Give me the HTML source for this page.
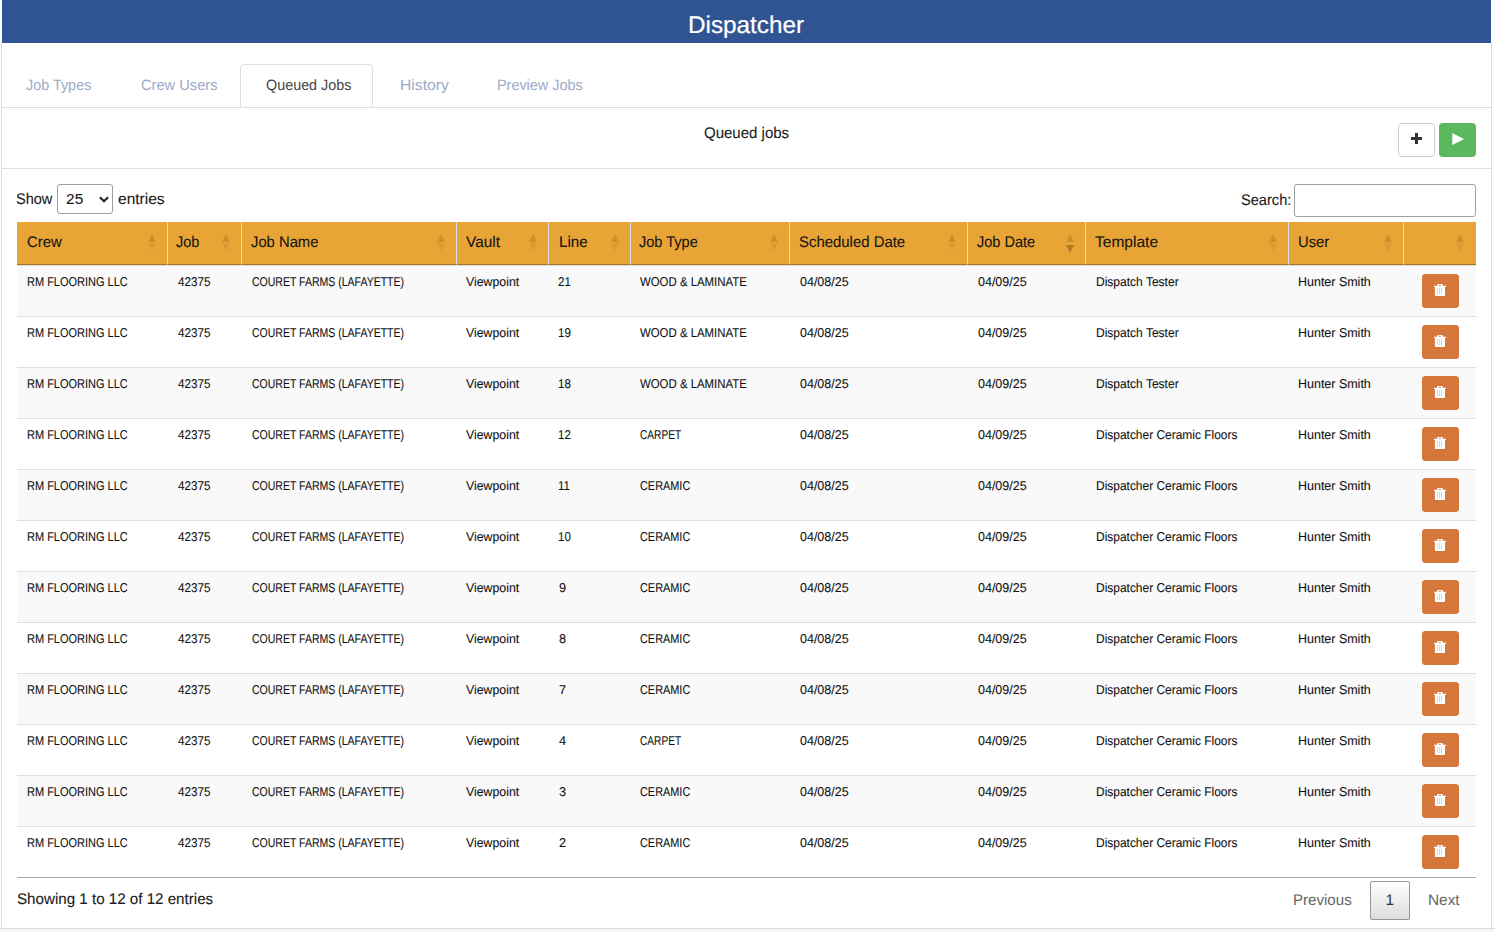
<!DOCTYPE html>
<html lang="en">
<head>
<meta charset="utf-8">
<title>Dispatcher</title>
<style>
*{box-sizing:border-box}
html,body{margin:0;padding:0}
body{text-rendering:geometricPrecision;width:1495px;height:932px;position:relative;overflow:hidden;background:#fff;color:#333;
 font-family:"Liberation Sans",sans-serif;font-size:15.4px;line-height:22px}
.s{display:inline-block;transform-origin:0 50%;white-space:nowrap}
.heading{position:absolute;left:2px;top:0;width:1489px;height:43px;background:#305393;color:#fff;text-align:center}
.heading h3{-webkit-text-stroke:0.2px #fff;margin:0;font-size:24.2px;font-weight:normal;line-height:43px;height:43px;position:absolute;left:0;top:4px;width:100%;text-align:left}
.panel{position:absolute;left:1px;top:43px;width:1491px;height:885px;border-left:1px solid #ddd;border-right:1px solid #ddd;background:#fff}
.footer{position:absolute;left:0;top:928px;width:1495px;height:4px;background:#f5f5f5;border-top:1px solid #ddd}
/* coordinates inside .panel: x = pageX-2, y = pageY-43 */
.tabs{list-style:none;margin:0;padding:0;position:absolute;left:0;top:21px;width:1489px;height:44px;border-bottom:1px solid #ddd}
.tabs li{position:absolute;top:0;height:44px}
.tabs li a{font-size:15px;display:block;height:44px;border:1px solid transparent;border-radius:4px 4px 0 0;color:#9caac8;line-height:22px;padding:10px 0 0 0;text-decoration:none;white-space:nowrap}
.tabs li.active a{border-color:#ddd;background:#fff;color:#444}
.subhead{position:absolute;left:0;top:65px;width:1489px;height:60px}
.subtitle{position:absolute;left:0;top:15px;width:100%;height:22px;line-height:22px;color:#1a1a1a;-webkit-text-stroke:0.1px #1a1a1a}
.btn{position:absolute;display:block;width:37px;height:34px;padding:0;margin:0;border-radius:3.5px;border:1px solid transparent;font:inherit;cursor:pointer}
.btn svg{position:absolute;display:block}
.btn-add{left:1396px;top:15px;background:#fff;border-color:#ccc}
.btn-add svg{left:12px;top:9px}
.btn-run{left:1437px;top:15px;background:#5cb85c;border-color:#5cb85c}
.btn-run svg{left:11.5px;top:9px}
.rule{position:absolute;left:0;top:125px;width:1489px;height:1px;background:#ddd}
.dt-length{position:absolute;left:15px;top:141px;height:30px;line-height:32px;white-space:nowrap;color:#1a1a1a;-webkit-text-stroke:0.1px #1a1a1a}
.dt-length label,.dt-filter label{display:block;position:relative;height:100%}
.dt-length .s,.dt-filter .s{position:absolute;top:0}
.select{position:absolute;left:40px;top:0;width:56px;height:30px}
.select select{-webkit-appearance:none;appearance:none;display:block;position:absolute;left:0;top:0;width:56px;height:30px;margin:0;padding:0 0 3px 8.1px;border:1px solid #9e9e9e;border-radius:3px;background:#fff;color:#1a1a1a;font-family:"Liberation Sans",sans-serif;font-size:15.4px;line-height:27px;letter-spacing:0.2px;outline:none}
.select svg{position:absolute;right:3.6px;top:11.6px;pointer-events:none}
.selv{position:absolute;left:0;top:0;height:28px;line-height:30px}
.dt-filter{position:absolute;left:1200px;top:141px;width:274px;height:33px;line-height:33px;color:#1a1a1a;-webkit-text-stroke:0.1px #1a1a1a}
.input{-webkit-appearance:none;appearance:none;display:block;position:absolute;right:0;top:0;width:182px;height:33px;margin:0;padding:5px;border:1px solid #a0a0a0;border-radius:3px;background:#fff;font:inherit;outline:none}
table.dt{position:absolute;left:15px;top:179px;width:1459px;border-collapse:separate;border-spacing:0;table-layout:fixed;border-bottom:1px solid #aaa}
table.dt th{position:relative;height:43px;padding:0;background:#e8a435;border-bottom:1px solid #a8761f;border-right:1px solid #ddd;color:#151515;-webkit-text-stroke:0.1px #151515;font-weight:normal;text-align:left;font-size:15.4px;line-height:22px;vertical-align:top;white-space:nowrap}
table.dt th.last{border-right:none}
table.dt th.last i{right:12px}
table.dt th .s{position:absolute;left:10px;top:10px}
table.dt th i{position:absolute;right:11.5px;width:0;height:0;border-left:4px solid transparent;border-right:4px solid transparent}
table.dt th i.up{top:12px;border-bottom:8px solid rgba(0,0,0,.12)}
table.dt th i.dn{top:21px;border-top:8px solid rgba(0,0,0,.055)}
table.dt th.sorting_desc i.dn{top:23px;border-top-color:rgba(0,0,0,.25)}
table.dt td{position:relative;height:51px;padding:0;border-top:1px solid #ddd;font-size:12.75px;line-height:18px;vertical-align:top;color:#111;-webkit-text-stroke:0.1px #111;white-space:nowrap}
table.dt tr.odd td{background:#f9f9f9}
table.dt td .s{position:absolute;left:10px;top:7px}
.btn-del{left:18px;top:8px;background:#d5773a;border-color:#d5773a;border-radius:3px}
.btn-del svg{left:11px;top:9px}
.dt-info{position:absolute;left:15px;top:846px;height:22px;line-height:22px;color:#1a1a1a;-webkit-text-stroke:0.1px #1a1a1a;white-space:nowrap}
.dt-paginate{position:absolute;left:0;top:838px;width:1489px;height:39px}
.pb{text-decoration:none;position:absolute;top:0;height:39px;line-height:37px;border:1px solid transparent;border-radius:2px;color:#666;white-space:nowrap}
.pb.prev{left:1276px;width:90px}
.pb.cur{left:1368px;width:40px;border-color:#979797;background:linear-gradient(to bottom,#fff 0%,#dcdcdc 100%);color:#333}
.pb.next{left:1411px;width:60px}
.pb .s{position:absolute;left:16px;top:0}

</style>
</head>
<body>
<div class="heading"><h3><span class="s" style="transform:scale(1.0044,1.0);margin-left:685.98px">Dispatcher</span></h3></div>
<div class="panel">
  <ul class="tabs">
    <li style="left:1px;width:111px"><a href="#job-types"><span class="s" style="transform:scale(0.9592,1.0);margin-left:22.30px">Job Types</span></a></li>
    <li style="left:114px;width:122px"><a href="#crew-users"><span class="s" style="transform:scale(0.9774,1.0);margin-left:23.76px">Crew Users</span></a></li>
    <li class="active" style="left:238px;width:133px"><a href="#queued-jobs"><span class="s" style="transform:scale(0.9573,1.0);margin-left:24.73px">Queued Jobs</span></a></li>
    <li style="left:373px;width:99px"><a href="#history"><span class="s" style="transform:scale(1.0450,1.0);margin-left:24.33px">History</span></a></li>
    <li style="left:474px;width:132px"><a href="#preview-jobs"><span class="s" style="transform:scale(0.9595,1.0);margin-left:20.07px">Preview Jobs</span></a></li>
  </ul>
  <div class="subhead">
    <div class="subtitle"><span class="s" style="transform:scale(0.9752,1.0);margin-left:702.01px">Queued jobs</span></div>
    <button type="button" class="btn btn-add" title="Add"><svg viewBox="0 0 11 11" width="11" height="11" aria-hidden="true"><path d="M4 0h3v4h4v3H7v4H4V7H0V4h4z" fill="#333"/></svg></button>
    <button type="button" class="btn btn-run" title="Run"><svg viewBox="0 0 12 12" width="12" height="12" aria-hidden="true"><path d="M0.3 0 12 6 0.3 12z" fill="#fff"/></svg></button>
  </div>
  <div class="rule"></div>
  <div class="dt-length"><label><span class="s" style="transform:scale(0.9440,1.0);margin-left:-0.86px">Show</span><span class="select"><select aria-label="entries per page"><option>10</option><option selected>25</option><option>50</option><option>100</option></select><svg viewBox="0 0 10 7" width="10" height="7" aria-hidden="true"><path d="M0.9 1.2l4.1 4.1 4.1-4.1" fill="none" stroke="#222" stroke-width="2.1" stroke-linecap="butt" stroke-linejoin="miter"/></svg></span><span class="s" style="transform:scale(1.0095,1.0);margin-left:100.53px">entries</span></label></div>
  <div class="dt-filter"><label><span class="s" style="transform:scale(0.9484,1.0);margin-left:38.66px">Search:</span><input class="input" type="search" aria-label="Search"></label></div>
  <table class="dt">
    <thead><tr>
<th class="sorting" style="width:151px"><span class="s" style="transform:scale(0.9666,1.0);margin-left:-0.10px">Crew</span><i class="up"></i><i class="dn"></i></th>
<th class="sorting" style="width:74px"><span class="s" style="transform:scale(0.9411,1.0);margin-left:-1.83px">Job</span><i class="up"></i><i class="dn"></i></th>
<th class="sorting" style="width:215px"><span class="s" style="transform:scale(0.9609,1.0);margin-left:-1.45px">Job Name</span><i class="up"></i><i class="dn"></i></th>
<th class="sorting" style="width:92px"><span class="s" style="transform:scale(1.0005,1.0);margin-left:-1.41px">Vault</span><i class="up"></i><i class="dn"></i></th>
<th class="sorting" style="width:82px"><span class="s" style="transform:scale(0.9872,1.0);margin-left:-0.43px">Line</span><i class="up"></i><i class="dn"></i></th>
<th class="sorting" style="width:159px"><span class="s" style="transform:scale(0.9446,1.0);margin-left:-1.87px">Job Type</span><i class="up"></i><i class="dn"></i></th>
<th class="sorting" style="width:178px"><span class="s" style="transform:scale(0.9692,1.0);margin-left:-1.06px">Scheduled Date</span><i class="up"></i><i class="dn"></i></th>
<th class="sorting_desc" style="width:118px"><span class="s" style="transform:scale(0.9447,1.0);margin-left:-0.83px">Job Date</span><i class="up"></i><i class="dn"></i></th>
<th class="sorting" style="width:203px"><span class="s" style="transform:scale(1.0095,1.0);margin-left:-0.98px">Template</span><i class="up"></i><i class="dn"></i></th>
<th class="sorting" style="width:115px"><span class="s" style="transform:scale(0.9619,1.0);margin-left:-1.16px">User</span><i class="up"></i><i class="dn"></i></th>
<th class="sorting last" style="width:72px"><i class="up"></i><i class="dn"></i></th>
    </tr></thead>
    <tbody>
<tr class="odd">
<td><span class="s" style="transform:scale(0.8616,1.0);margin-left:0.08px">RM FLOORING LLC</span></td>
<td><span class="s" style="transform:scale(0.9170,1.0);margin-left:0.16px">42375</span></td>
<td><span class="s" style="transform:scale(0.8244,1.0);margin-left:-0.31px">COURET FARMS (LAFAYETTE)</span></td>
<td><span class="s" style="transform:scale(0.9668,1.0);margin-left:-0.84px">Viewpoint</span></td>
<td><span class="s" style="transform:scale(0.9045,1.0);margin-left:-0.72px">21</span></td>
<td><span class="s" style="transform:scale(0.8937,1.0);margin-left:-1.19px">WOOD &amp; LAMINATE</span></td>
<td><span class="s" style="transform:scale(0.9802,1.0);margin-left:0.02px">04/08/25</span></td>
<td><span class="s" style="transform:scale(0.9802,1.0);margin-left:0.02px">04/09/25</span></td>
<td><span class="s" style="transform:scale(0.9431,1.0);margin-left:-0.16px">Dispatch Tester</span></td>
<td><span class="s" style="transform:scale(0.9782,1.0);margin-left:-0.82px">Hunter Smith</span></td>
<td class="act"><button type="button" class="btn btn-del" title="Delete"><svg class="ic-trash" viewBox="0 0 12 12" width="12" height="12" aria-hidden="true"><path d="M3.5 0h5l0.6 1.7H12v1.4H0V1.7h2.9z M4.5 1.35a1.3 0.5 0 0 0 2.6 0a1.3 0.5 0 0 0 -2.6 0z M0.9 3.1h10.1v8.1a0.8 0.8 0 0 1-0.8 0.8H1.7a0.8 0.8 0 0 1-0.8-0.8z" fill="#fff" fill-rule="evenodd"/><path d="M3.1 4h0.8v6h-0.8z M5 4h0.9v6H5z M7 4h0.9v6H7z" fill="#e9a04d" fill-opacity="0.55"/></svg></button></td>
</tr>
<tr class="even">
<td><span class="s" style="transform:scale(0.8616,1.0);margin-left:0.08px">RM FLOORING LLC</span></td>
<td><span class="s" style="transform:scale(0.9170,1.0);margin-left:0.16px">42375</span></td>
<td><span class="s" style="transform:scale(0.8244,1.0);margin-left:-0.31px">COURET FARMS (LAFAYETTE)</span></td>
<td><span class="s" style="transform:scale(0.9668,1.0);margin-left:-0.84px">Viewpoint</span></td>
<td><span class="s" style="transform:scale(0.9045,1.0);margin-left:-0.72px">19</span></td>
<td><span class="s" style="transform:scale(0.8937,1.0);margin-left:-1.19px">WOOD &amp; LAMINATE</span></td>
<td><span class="s" style="transform:scale(0.9802,1.0);margin-left:0.02px">04/08/25</span></td>
<td><span class="s" style="transform:scale(0.9802,1.0);margin-left:0.02px">04/09/25</span></td>
<td><span class="s" style="transform:scale(0.9431,1.0);margin-left:-0.16px">Dispatch Tester</span></td>
<td><span class="s" style="transform:scale(0.9782,1.0);margin-left:-0.82px">Hunter Smith</span></td>
<td class="act"><button type="button" class="btn btn-del" title="Delete"><svg class="ic-trash" viewBox="0 0 12 12" width="12" height="12" aria-hidden="true"><path d="M3.5 0h5l0.6 1.7H12v1.4H0V1.7h2.9z M4.5 1.35a1.3 0.5 0 0 0 2.6 0a1.3 0.5 0 0 0 -2.6 0z M0.9 3.1h10.1v8.1a0.8 0.8 0 0 1-0.8 0.8H1.7a0.8 0.8 0 0 1-0.8-0.8z" fill="#fff" fill-rule="evenodd"/><path d="M3.1 4h0.8v6h-0.8z M5 4h0.9v6H5z M7 4h0.9v6H7z" fill="#e9a04d" fill-opacity="0.55"/></svg></button></td>
</tr>
<tr class="odd">
<td><span class="s" style="transform:scale(0.8616,1.0);margin-left:0.08px">RM FLOORING LLC</span></td>
<td><span class="s" style="transform:scale(0.9170,1.0);margin-left:0.16px">42375</span></td>
<td><span class="s" style="transform:scale(0.8244,1.0);margin-left:-0.31px">COURET FARMS (LAFAYETTE)</span></td>
<td><span class="s" style="transform:scale(0.9668,1.0);margin-left:-0.84px">Viewpoint</span></td>
<td><span class="s" style="transform:scale(0.9045,1.0);margin-left:-0.72px">18</span></td>
<td><span class="s" style="transform:scale(0.8937,1.0);margin-left:-1.19px">WOOD &amp; LAMINATE</span></td>
<td><span class="s" style="transform:scale(0.9802,1.0);margin-left:0.02px">04/08/25</span></td>
<td><span class="s" style="transform:scale(0.9802,1.0);margin-left:0.02px">04/09/25</span></td>
<td><span class="s" style="transform:scale(0.9431,1.0);margin-left:-0.16px">Dispatch Tester</span></td>
<td><span class="s" style="transform:scale(0.9782,1.0);margin-left:-0.82px">Hunter Smith</span></td>
<td class="act"><button type="button" class="btn btn-del" title="Delete"><svg class="ic-trash" viewBox="0 0 12 12" width="12" height="12" aria-hidden="true"><path d="M3.5 0h5l0.6 1.7H12v1.4H0V1.7h2.9z M4.5 1.35a1.3 0.5 0 0 0 2.6 0a1.3 0.5 0 0 0 -2.6 0z M0.9 3.1h10.1v8.1a0.8 0.8 0 0 1-0.8 0.8H1.7a0.8 0.8 0 0 1-0.8-0.8z" fill="#fff" fill-rule="evenodd"/><path d="M3.1 4h0.8v6h-0.8z M5 4h0.9v6H5z M7 4h0.9v6H7z" fill="#e9a04d" fill-opacity="0.55"/></svg></button></td>
</tr>
<tr class="even">
<td><span class="s" style="transform:scale(0.8616,1.0);margin-left:0.08px">RM FLOORING LLC</span></td>
<td><span class="s" style="transform:scale(0.9170,1.0);margin-left:0.16px">42375</span></td>
<td><span class="s" style="transform:scale(0.8244,1.0);margin-left:-0.31px">COURET FARMS (LAFAYETTE)</span></td>
<td><span class="s" style="transform:scale(0.9668,1.0);margin-left:-0.84px">Viewpoint</span></td>
<td><span class="s" style="transform:scale(0.9045,1.0);margin-left:-0.72px">12</span></td>
<td><span class="s" style="transform:scale(0.7942,1.0);margin-left:-0.69px">CARPET</span></td>
<td><span class="s" style="transform:scale(0.9802,1.0);margin-left:0.02px">04/08/25</span></td>
<td><span class="s" style="transform:scale(0.9802,1.0);margin-left:0.02px">04/09/25</span></td>
<td><span class="s" style="transform:scale(0.9374,1.0);margin-left:-0.16px">Dispatcher Ceramic Floors</span></td>
<td><span class="s" style="transform:scale(0.9782,1.0);margin-left:-0.82px">Hunter Smith</span></td>
<td class="act"><button type="button" class="btn btn-del" title="Delete"><svg class="ic-trash" viewBox="0 0 12 12" width="12" height="12" aria-hidden="true"><path d="M3.5 0h5l0.6 1.7H12v1.4H0V1.7h2.9z M4.5 1.35a1.3 0.5 0 0 0 2.6 0a1.3 0.5 0 0 0 -2.6 0z M0.9 3.1h10.1v8.1a0.8 0.8 0 0 1-0.8 0.8H1.7a0.8 0.8 0 0 1-0.8-0.8z" fill="#fff" fill-rule="evenodd"/><path d="M3.1 4h0.8v6h-0.8z M5 4h0.9v6H5z M7 4h0.9v6H7z" fill="#e9a04d" fill-opacity="0.55"/></svg></button></td>
</tr>
<tr class="odd">
<td><span class="s" style="transform:scale(0.8616,1.0);margin-left:0.08px">RM FLOORING LLC</span></td>
<td><span class="s" style="transform:scale(0.9170,1.0);margin-left:0.16px">42375</span></td>
<td><span class="s" style="transform:scale(0.8244,1.0);margin-left:-0.31px">COURET FARMS (LAFAYETTE)</span></td>
<td><span class="s" style="transform:scale(0.9668,1.0);margin-left:-0.84px">Viewpoint</span></td>
<td><span class="s" style="transform:scale(0.9045,1.0);margin-left:-0.72px">11</span></td>
<td><span class="s" style="transform:scale(0.8546,1.0);margin-left:-0.81px">CERAMIC</span></td>
<td><span class="s" style="transform:scale(0.9802,1.0);margin-left:0.02px">04/08/25</span></td>
<td><span class="s" style="transform:scale(0.9802,1.0);margin-left:0.02px">04/09/25</span></td>
<td><span class="s" style="transform:scale(0.9374,1.0);margin-left:-0.16px">Dispatcher Ceramic Floors</span></td>
<td><span class="s" style="transform:scale(0.9782,1.0);margin-left:-0.82px">Hunter Smith</span></td>
<td class="act"><button type="button" class="btn btn-del" title="Delete"><svg class="ic-trash" viewBox="0 0 12 12" width="12" height="12" aria-hidden="true"><path d="M3.5 0h5l0.6 1.7H12v1.4H0V1.7h2.9z M4.5 1.35a1.3 0.5 0 0 0 2.6 0a1.3 0.5 0 0 0 -2.6 0z M0.9 3.1h10.1v8.1a0.8 0.8 0 0 1-0.8 0.8H1.7a0.8 0.8 0 0 1-0.8-0.8z" fill="#fff" fill-rule="evenodd"/><path d="M3.1 4h0.8v6h-0.8z M5 4h0.9v6H5z M7 4h0.9v6H7z" fill="#e9a04d" fill-opacity="0.55"/></svg></button></td>
</tr>
<tr class="even">
<td><span class="s" style="transform:scale(0.8616,1.0);margin-left:0.08px">RM FLOORING LLC</span></td>
<td><span class="s" style="transform:scale(0.9170,1.0);margin-left:0.16px">42375</span></td>
<td><span class="s" style="transform:scale(0.8244,1.0);margin-left:-0.31px">COURET FARMS (LAFAYETTE)</span></td>
<td><span class="s" style="transform:scale(0.9668,1.0);margin-left:-0.84px">Viewpoint</span></td>
<td><span class="s" style="transform:scale(0.9045,1.0);margin-left:-0.72px">10</span></td>
<td><span class="s" style="transform:scale(0.8546,1.0);margin-left:-0.81px">CERAMIC</span></td>
<td><span class="s" style="transform:scale(0.9802,1.0);margin-left:0.02px">04/08/25</span></td>
<td><span class="s" style="transform:scale(0.9802,1.0);margin-left:0.02px">04/09/25</span></td>
<td><span class="s" style="transform:scale(0.9374,1.0);margin-left:-0.16px">Dispatcher Ceramic Floors</span></td>
<td><span class="s" style="transform:scale(0.9782,1.0);margin-left:-0.82px">Hunter Smith</span></td>
<td class="act"><button type="button" class="btn btn-del" title="Delete"><svg class="ic-trash" viewBox="0 0 12 12" width="12" height="12" aria-hidden="true"><path d="M3.5 0h5l0.6 1.7H12v1.4H0V1.7h2.9z M4.5 1.35a1.3 0.5 0 0 0 2.6 0a1.3 0.5 0 0 0 -2.6 0z M0.9 3.1h10.1v8.1a0.8 0.8 0 0 1-0.8 0.8H1.7a0.8 0.8 0 0 1-0.8-0.8z" fill="#fff" fill-rule="evenodd"/><path d="M3.1 4h0.8v6h-0.8z M5 4h0.9v6H5z M7 4h0.9v6H7z" fill="#e9a04d" fill-opacity="0.55"/></svg></button></td>
</tr>
<tr class="odd">
<td><span class="s" style="transform:scale(0.8616,1.0);margin-left:0.08px">RM FLOORING LLC</span></td>
<td><span class="s" style="transform:scale(0.9170,1.0);margin-left:0.16px">42375</span></td>
<td><span class="s" style="transform:scale(0.8244,1.0);margin-left:-0.31px">COURET FARMS (LAFAYETTE)</span></td>
<td><span class="s" style="transform:scale(0.9668,1.0);margin-left:-0.84px">Viewpoint</span></td>
<td><span class="s" style="transform:scale(1.0000,1.0);margin-left:-0.05px">9</span></td>
<td><span class="s" style="transform:scale(0.8546,1.0);margin-left:-0.81px">CERAMIC</span></td>
<td><span class="s" style="transform:scale(0.9802,1.0);margin-left:0.02px">04/08/25</span></td>
<td><span class="s" style="transform:scale(0.9802,1.0);margin-left:0.02px">04/09/25</span></td>
<td><span class="s" style="transform:scale(0.9374,1.0);margin-left:-0.16px">Dispatcher Ceramic Floors</span></td>
<td><span class="s" style="transform:scale(0.9782,1.0);margin-left:-0.82px">Hunter Smith</span></td>
<td class="act"><button type="button" class="btn btn-del" title="Delete"><svg class="ic-trash" viewBox="0 0 12 12" width="12" height="12" aria-hidden="true"><path d="M3.5 0h5l0.6 1.7H12v1.4H0V1.7h2.9z M4.5 1.35a1.3 0.5 0 0 0 2.6 0a1.3 0.5 0 0 0 -2.6 0z M0.9 3.1h10.1v8.1a0.8 0.8 0 0 1-0.8 0.8H1.7a0.8 0.8 0 0 1-0.8-0.8z" fill="#fff" fill-rule="evenodd"/><path d="M3.1 4h0.8v6h-0.8z M5 4h0.9v6H5z M7 4h0.9v6H7z" fill="#e9a04d" fill-opacity="0.55"/></svg></button></td>
</tr>
<tr class="even">
<td><span class="s" style="transform:scale(0.8616,1.0);margin-left:0.08px">RM FLOORING LLC</span></td>
<td><span class="s" style="transform:scale(0.9170,1.0);margin-left:0.16px">42375</span></td>
<td><span class="s" style="transform:scale(0.8244,1.0);margin-left:-0.31px">COURET FARMS (LAFAYETTE)</span></td>
<td><span class="s" style="transform:scale(0.9668,1.0);margin-left:-0.84px">Viewpoint</span></td>
<td><span class="s" style="transform:scale(1.0000,1.0);margin-left:-0.05px">8</span></td>
<td><span class="s" style="transform:scale(0.8546,1.0);margin-left:-0.81px">CERAMIC</span></td>
<td><span class="s" style="transform:scale(0.9802,1.0);margin-left:0.02px">04/08/25</span></td>
<td><span class="s" style="transform:scale(0.9802,1.0);margin-left:0.02px">04/09/25</span></td>
<td><span class="s" style="transform:scale(0.9374,1.0);margin-left:-0.16px">Dispatcher Ceramic Floors</span></td>
<td><span class="s" style="transform:scale(0.9782,1.0);margin-left:-0.82px">Hunter Smith</span></td>
<td class="act"><button type="button" class="btn btn-del" title="Delete"><svg class="ic-trash" viewBox="0 0 12 12" width="12" height="12" aria-hidden="true"><path d="M3.5 0h5l0.6 1.7H12v1.4H0V1.7h2.9z M4.5 1.35a1.3 0.5 0 0 0 2.6 0a1.3 0.5 0 0 0 -2.6 0z M0.9 3.1h10.1v8.1a0.8 0.8 0 0 1-0.8 0.8H1.7a0.8 0.8 0 0 1-0.8-0.8z" fill="#fff" fill-rule="evenodd"/><path d="M3.1 4h0.8v6h-0.8z M5 4h0.9v6H5z M7 4h0.9v6H7z" fill="#e9a04d" fill-opacity="0.55"/></svg></button></td>
</tr>
<tr class="odd">
<td><span class="s" style="transform:scale(0.8616,1.0);margin-left:0.08px">RM FLOORING LLC</span></td>
<td><span class="s" style="transform:scale(0.9170,1.0);margin-left:0.16px">42375</span></td>
<td><span class="s" style="transform:scale(0.8244,1.0);margin-left:-0.31px">COURET FARMS (LAFAYETTE)</span></td>
<td><span class="s" style="transform:scale(0.9668,1.0);margin-left:-0.84px">Viewpoint</span></td>
<td><span class="s" style="transform:scale(1.0000,1.0);margin-left:-0.05px">7</span></td>
<td><span class="s" style="transform:scale(0.8546,1.0);margin-left:-0.81px">CERAMIC</span></td>
<td><span class="s" style="transform:scale(0.9802,1.0);margin-left:0.02px">04/08/25</span></td>
<td><span class="s" style="transform:scale(0.9802,1.0);margin-left:0.02px">04/09/25</span></td>
<td><span class="s" style="transform:scale(0.9374,1.0);margin-left:-0.16px">Dispatcher Ceramic Floors</span></td>
<td><span class="s" style="transform:scale(0.9782,1.0);margin-left:-0.82px">Hunter Smith</span></td>
<td class="act"><button type="button" class="btn btn-del" title="Delete"><svg class="ic-trash" viewBox="0 0 12 12" width="12" height="12" aria-hidden="true"><path d="M3.5 0h5l0.6 1.7H12v1.4H0V1.7h2.9z M4.5 1.35a1.3 0.5 0 0 0 2.6 0a1.3 0.5 0 0 0 -2.6 0z M0.9 3.1h10.1v8.1a0.8 0.8 0 0 1-0.8 0.8H1.7a0.8 0.8 0 0 1-0.8-0.8z" fill="#fff" fill-rule="evenodd"/><path d="M3.1 4h0.8v6h-0.8z M5 4h0.9v6H5z M7 4h0.9v6H7z" fill="#e9a04d" fill-opacity="0.55"/></svg></button></td>
</tr>
<tr class="even">
<td><span class="s" style="transform:scale(0.8616,1.0);margin-left:0.08px">RM FLOORING LLC</span></td>
<td><span class="s" style="transform:scale(0.9170,1.0);margin-left:0.16px">42375</span></td>
<td><span class="s" style="transform:scale(0.8244,1.0);margin-left:-0.31px">COURET FARMS (LAFAYETTE)</span></td>
<td><span class="s" style="transform:scale(0.9668,1.0);margin-left:-0.84px">Viewpoint</span></td>
<td><span class="s" style="transform:scale(1.0000,1.0);margin-left:-0.05px">4</span></td>
<td><span class="s" style="transform:scale(0.7942,1.0);margin-left:-0.69px">CARPET</span></td>
<td><span class="s" style="transform:scale(0.9802,1.0);margin-left:0.02px">04/08/25</span></td>
<td><span class="s" style="transform:scale(0.9802,1.0);margin-left:0.02px">04/09/25</span></td>
<td><span class="s" style="transform:scale(0.9374,1.0);margin-left:-0.16px">Dispatcher Ceramic Floors</span></td>
<td><span class="s" style="transform:scale(0.9782,1.0);margin-left:-0.82px">Hunter Smith</span></td>
<td class="act"><button type="button" class="btn btn-del" title="Delete"><svg class="ic-trash" viewBox="0 0 12 12" width="12" height="12" aria-hidden="true"><path d="M3.5 0h5l0.6 1.7H12v1.4H0V1.7h2.9z M4.5 1.35a1.3 0.5 0 0 0 2.6 0a1.3 0.5 0 0 0 -2.6 0z M0.9 3.1h10.1v8.1a0.8 0.8 0 0 1-0.8 0.8H1.7a0.8 0.8 0 0 1-0.8-0.8z" fill="#fff" fill-rule="evenodd"/><path d="M3.1 4h0.8v6h-0.8z M5 4h0.9v6H5z M7 4h0.9v6H7z" fill="#e9a04d" fill-opacity="0.55"/></svg></button></td>
</tr>
<tr class="odd">
<td><span class="s" style="transform:scale(0.8616,1.0);margin-left:0.08px">RM FLOORING LLC</span></td>
<td><span class="s" style="transform:scale(0.9170,1.0);margin-left:0.16px">42375</span></td>
<td><span class="s" style="transform:scale(0.8244,1.0);margin-left:-0.31px">COURET FARMS (LAFAYETTE)</span></td>
<td><span class="s" style="transform:scale(0.9668,1.0);margin-left:-0.84px">Viewpoint</span></td>
<td><span class="s" style="transform:scale(1.0000,1.0);margin-left:-0.05px">3</span></td>
<td><span class="s" style="transform:scale(0.8546,1.0);margin-left:-0.81px">CERAMIC</span></td>
<td><span class="s" style="transform:scale(0.9802,1.0);margin-left:0.02px">04/08/25</span></td>
<td><span class="s" style="transform:scale(0.9802,1.0);margin-left:0.02px">04/09/25</span></td>
<td><span class="s" style="transform:scale(0.9374,1.0);margin-left:-0.16px">Dispatcher Ceramic Floors</span></td>
<td><span class="s" style="transform:scale(0.9782,1.0);margin-left:-0.82px">Hunter Smith</span></td>
<td class="act"><button type="button" class="btn btn-del" title="Delete"><svg class="ic-trash" viewBox="0 0 12 12" width="12" height="12" aria-hidden="true"><path d="M3.5 0h5l0.6 1.7H12v1.4H0V1.7h2.9z M4.5 1.35a1.3 0.5 0 0 0 2.6 0a1.3 0.5 0 0 0 -2.6 0z M0.9 3.1h10.1v8.1a0.8 0.8 0 0 1-0.8 0.8H1.7a0.8 0.8 0 0 1-0.8-0.8z" fill="#fff" fill-rule="evenodd"/><path d="M3.1 4h0.8v6h-0.8z M5 4h0.9v6H5z M7 4h0.9v6H7z" fill="#e9a04d" fill-opacity="0.55"/></svg></button></td>
</tr>
<tr class="even">
<td><span class="s" style="transform:scale(0.8616,1.0);margin-left:0.08px">RM FLOORING LLC</span></td>
<td><span class="s" style="transform:scale(0.9170,1.0);margin-left:0.16px">42375</span></td>
<td><span class="s" style="transform:scale(0.8244,1.0);margin-left:-0.31px">COURET FARMS (LAFAYETTE)</span></td>
<td><span class="s" style="transform:scale(0.9668,1.0);margin-left:-0.84px">Viewpoint</span></td>
<td><span class="s" style="transform:scale(1.0000,1.0);margin-left:-0.05px">2</span></td>
<td><span class="s" style="transform:scale(0.8546,1.0);margin-left:-0.81px">CERAMIC</span></td>
<td><span class="s" style="transform:scale(0.9802,1.0);margin-left:0.02px">04/08/25</span></td>
<td><span class="s" style="transform:scale(0.9802,1.0);margin-left:0.02px">04/09/25</span></td>
<td><span class="s" style="transform:scale(0.9374,1.0);margin-left:-0.16px">Dispatcher Ceramic Floors</span></td>
<td><span class="s" style="transform:scale(0.9782,1.0);margin-left:-0.82px">Hunter Smith</span></td>
<td class="act"><button type="button" class="btn btn-del" title="Delete"><svg class="ic-trash" viewBox="0 0 12 12" width="12" height="12" aria-hidden="true"><path d="M3.5 0h5l0.6 1.7H12v1.4H0V1.7h2.9z M4.5 1.35a1.3 0.5 0 0 0 2.6 0a1.3 0.5 0 0 0 -2.6 0z M0.9 3.1h10.1v8.1a0.8 0.8 0 0 1-0.8 0.8H1.7a0.8 0.8 0 0 1-0.8-0.8z" fill="#fff" fill-rule="evenodd"/><path d="M3.1 4h0.8v6h-0.8z M5 4h0.9v6H5z M7 4h0.9v6H7z" fill="#e9a04d" fill-opacity="0.55"/></svg></button></td>
</tr>
    </tbody>
  </table>
  <div class="dt-info"><span class="s" style="transform:scale(0.9839,1.0);margin-left:-0.40px">Showing 1 to 12 of 12 entries</span></div>
  <div class="dt-paginate"><a class="pb prev"><span class="s" style="transform:scale(0.9801,1.0);margin-left:-1.53px">Previous</span></a><a class="pb cur"><span class="s" style="transform:scale(1.0000,1.0);margin-left:-1.47px">1</span></a><a class="pb next"><span class="s" style="transform:scale(0.9999,1.0);margin-left:-2.06px">Next</span></a></div>
</div>
<div class="footer"></div>
</body>
</html>
